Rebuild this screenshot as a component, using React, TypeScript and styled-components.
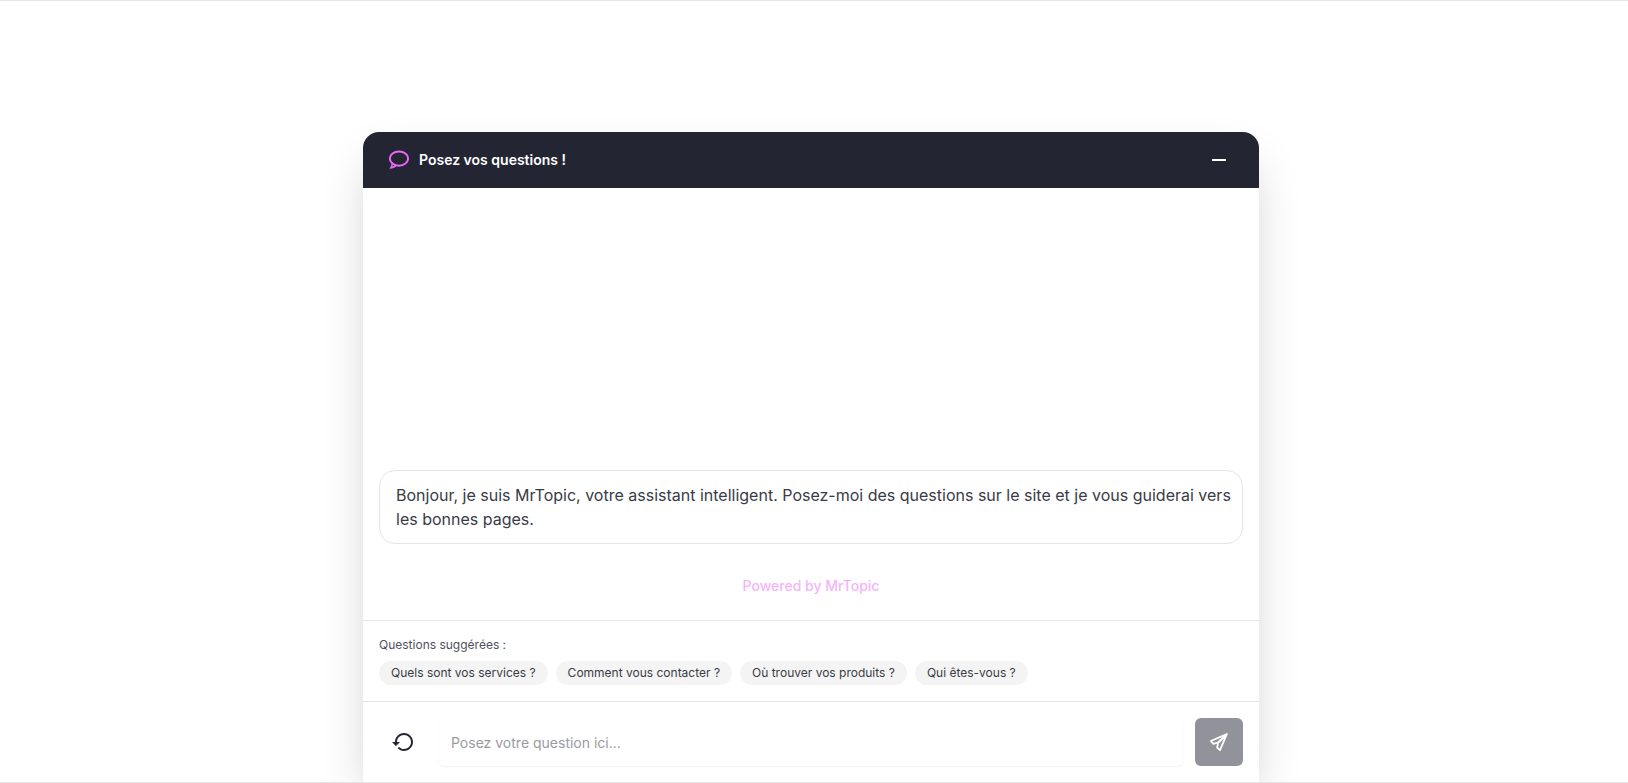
import React, { useState } from "react";
import styled, { createGlobalStyle } from "styled-components";

const GlobalStyle = createGlobalStyle`
  *, *::before, *::after { box-sizing: border-box; }
  body {
    margin: 0;
    background: #ffffff;
    color: #232533;
    font-family: Inter, "Liberation Sans", sans-serif;
  }
  button, input { font: inherit; color: inherit; }
`;

const Section = styled.main`
  padding: 131px 22px 0 16px;
  border: solid #e5e5e5;
  border-width: 1px 0;
  overflow: hidden;
`;

const Panel = styled.section`
  display: flex;
  flex-direction: column;
  width: 100%;
  max-width: 896px;
  margin: 0 auto;
  border-radius: 16px 16px 0 0;
  background: #ffffff;
  box-shadow: 0 25px 50px -12px rgba(0, 0, 0, 0.25);
`;

const Header = styled.header`
  display: flex;
  align-items: center;
  justify-content: space-between;
  height: 56px;
  padding: 0 28px 0 26px;
  border-radius: 16px 16px 0 0;
  background: #232533;
  color: #ffffff;
`;

const Title = styled.h1`
  display: flex;
  align-items: center;
  gap: 10px;
  margin: 0;
  font-size: 14px;
  line-height: 20px;
  font-weight: 600;

  svg { color: #e969f5; }
`;

const IconButton = styled.button<{ $size: number }>`
  display: flex;
  align-items: center;
  justify-content: center;
  flex: none;
  width: ${({ $size }) => $size}px;
  height: ${({ $size }) => $size}px;
  padding: 0;
  border: 0;
  border-radius: 6px;
  background: transparent;
  cursor: pointer;
`;

const SendButton = styled(IconButton)`
  background: #92939a;
  color: #ffffff;

  &:enabled { background: #232533; }
`;

const Messages = styled.div`
  display: flex;
  flex-direction: column;
  justify-content: flex-end;
  gap: 32px;
  min-height: 432px;
  padding: 16px 16px 24px;
`;

const Bubble = styled.p`
  margin: 0;
  padding: 12px 8px 12px 16px;
  border: 1px solid #e5e5e5;
  border-radius: 16px;
  color: #393b47;
  font-size: 16px;
  line-height: 24px;
`;

const Credit = styled.a`
  align-self: center;
  color: #f4b4fa;
  font-size: 14px;
  line-height: 20px;
  font-weight: 500;
  text-decoration: none;
`;

const Suggestions = styled.div`
  display: flex;
  flex-direction: column;
  gap: 8px;
  padding: 16px;
  border-top: 1px solid #e5e5e5;
  font-size: 12px;
  line-height: 16px;
`;

const SuggestionLabel = styled.p`
  margin: 0;
  color: #4f515c;
`;

const ChipRow = styled.div`
  display: flex;
  flex-wrap: wrap;
  gap: 8px;
`;

const Chip = styled.button`
  padding: 4px 12px;
  border: 0;
  border-radius: 12px;
  background: #f4f4f4;
  color: #393b47;
  cursor: pointer;
`;

const Composer = styled.form`
  display: flex;
  align-items: center;
  gap: 12px;
  padding: 16px;
  border-top: 1px solid #e5e5e5;
`;

const QuestionInput = styled.input`
  flex: 1;
  min-width: 0;
  height: 48px;
  padding: 0 12px;
  border: 0;
  border-radius: 6px;
  background: #ffffff;
  box-shadow: 0 1px 2px rgba(0, 0, 0, 0.05);
  font-size: 14px;
  line-height: 20px;

  &::placeholder {
    color: #9a9ba1;
    opacity: 1;
  }
`;

const questions = [
  "Quels sont vos services ?",
  "Comment vous contacter ?",
  "Où trouver vos produits ?",
  "Qui êtes-vous ?",
];

const ChatIcon = () => (
  <svg
    width="20"
    height="20"
    viewBox="0 0 20 20"
    fill="none"
    stroke="currentColor"
    strokeWidth="1.9"
    aria-hidden="true"
  >
    <ellipse cx="10" cy="8.6" rx="9.1" ry="7.1" />
    <path
      d="M2.6 12.2C2.7 14.8 1.8 16.6.3 18.7c3.2.1 5.4-.8 7.3-2.7l-1.6-1.4c-.8.9-1.6 1.5-2.8 1.8.8-1.2 1.1-2 1-3.3z"
      fill="currentColor"
      stroke="none"
    />
  </svg>
);

const MinusIcon = () => (
  <svg width="24" height="24" viewBox="0 0 24 24" fill="currentColor" aria-hidden="true">
    <path d="M5 11h14v2H5z" />
  </svg>
);

const RestartIcon = () => (
  <svg width="24" height="24" viewBox="0 0 24 24" fill="currentColor" aria-hidden="true">
    <path d="M13 3c-4.97 0-9 4.03-9 9H1l3.89 3.89.07.14L9 12H6c0-3.87 3.13-7 7-7s7 3.13 7 7-3.13 7-7 7c-1.93 0-3.68-.79-4.94-2.06l-1.42 1.42C8.27 19.99 10.51 21 13 21c4.97 0 9-4.03 9-9s-4.03-9-9-9z" />
  </svg>
);

const PlaneIcon = () => (
  <svg
    width="20"
    height="20"
    viewBox="0 0 20 20"
    fill="none"
    stroke="currentColor"
    strokeWidth="1.8"
    strokeLinejoin="round"
    aria-hidden="true"
  >
    <path d="M17.8 2.2 1.8 9l2.7 2.9 4.5-1.4z" />
    <path d="M17.8 2.2 11 18.2l-2.9-2.7 1-4.6z" />
  </svg>
);

export default function App() {
  const [question, setQuestion] = useState("");

  return (
    <>
      <GlobalStyle />
      <Section>
        <Panel>
          <Header>
            <Title>
              <ChatIcon />
              Posez vos questions !
            </Title>
            <IconButton $size={24} type="button" aria-label="Réduire">
              <MinusIcon />
            </IconButton>
          </Header>
          <Messages>
            <Bubble>
              Bonjour, je suis MrTopic, votre assistant intelligent. Posez-moi des questions sur le
              site et je vous guiderai vers les bonnes pages.
            </Bubble>
            <Credit href="#mrtopic">Powered by MrTopic</Credit>
          </Messages>
          <Suggestions>
            <SuggestionLabel>Questions suggérées :</SuggestionLabel>
            <ChipRow>
              {questions.map((text) => (
                <Chip key={text} type="button" onClick={() => setQuestion(text)}>
                  {text}
                </Chip>
              ))}
            </ChipRow>
          </Suggestions>
          <Composer onSubmit={(event) => event.preventDefault()}>
            <IconButton $size={48} type="button" aria-label="Recommencer" onClick={() => setQuestion("")}>
              <RestartIcon />
            </IconButton>
            <QuestionInput
              aria-label="Votre question"
              placeholder="Posez votre question ici..."
              value={question}
              onChange={(event) => setQuestion(event.target.value)}
            />
            <SendButton $size={48} type="submit" aria-label="Envoyer" disabled={!question}>
              <PlaneIcon />
            </SendButton>
          </Composer>
        </Panel>
      </Section>
    </>
  );
}
